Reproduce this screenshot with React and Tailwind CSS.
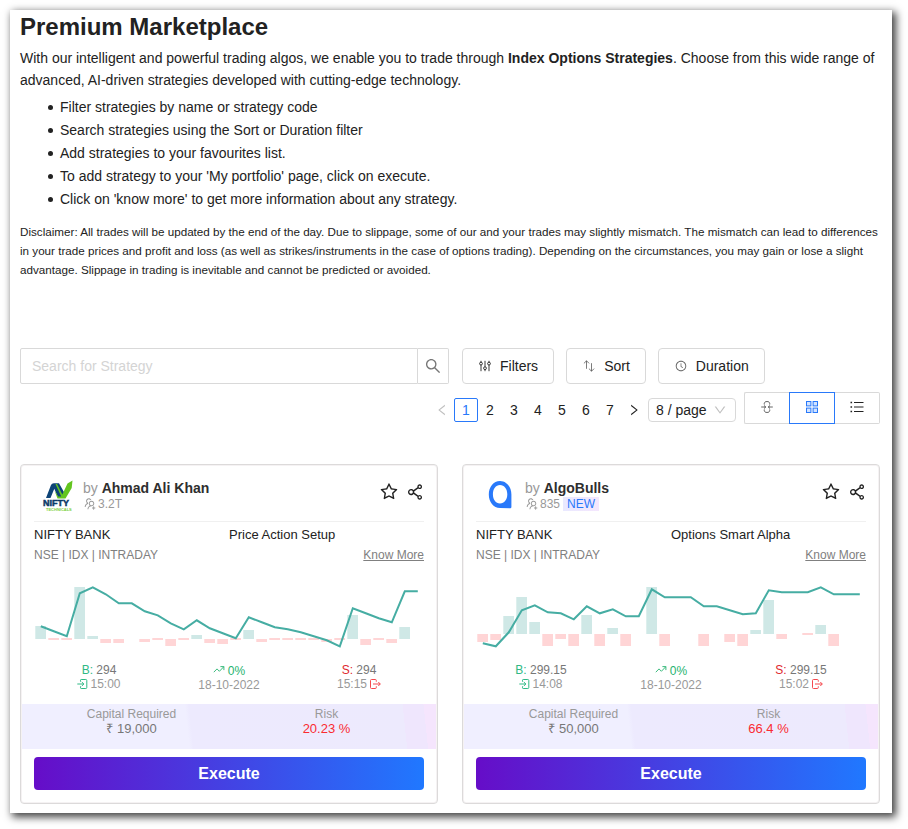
import React from "react";
import {
  AiOutlineClockCircle,
  AiOutlineDown,
  AiOutlineLeft,
  AiOutlineRight,
  AiOutlineSearch,
  AiOutlineShareAlt,
  AiOutlineStar,
  AiOutlineUsergroupAdd,
} from "react-icons/ai";

const TIPS = [
  "Filter strategies by name or strategy code",
  "Search strategies using the Sort or Duration filter",
  "Add strategies to your favourites list.",
  "To add strategy to your 'My portfolio' page, click on execute.",
  "Click on 'know more' to get more information about any strategy.",
];

const STRATEGIES = [
  {
    author: "Ahmad Ali Khan",
    logo: "nifty",
    followers: "3.2T",
    isNew: false,
    name: "Price Action Setup",
    buy: "294",
    buyTime: "15:00",
    sell: "294",
    sellTime: "15:15",
    capital: "₹ 19,000",
    risk: "20.23 %",
    base: 64,
    line: [51, 56, 61, 18, 12, 19, 28, 28, 36, 40, 48, 54, 45, 53, 58, 63, 42, 47, 52, 54, 57, 61, 65, 71, 33, 38, 43, 47, 16, 16],
    bars: [13, -2, -2, 52, 3, -4, -4, 0, -3, -2, -7, -2, 4, -4, -5, -2, 9, -3, -2, -1, -1, -2, -3, -2, 24, -6, -1, -4, 12, 0],
  },
  {
    author: "AlgoBulls",
    logo: "algobulls",
    followers: "835",
    isNew: true,
    name: "Options Smart Alpha",
    buy: "299.15",
    buyTime: "14:08",
    sell: "299.15",
    sellTime: "15:02",
    capital: "₹ 50,000",
    risk: "66.4 %",
    base: 59,
    line: [68, 71, 57, 35, 30, 37, 38, 44, 31, 38, 34, 41, 41, 14, 22, 22, 22, 31, 31, 35, 39, 38, 15, 17, 17, 17, 12, 19, 19, 19],
    bars: [-8, -6, 18, 37, 12, -12, -5, -12, 19, -12, 6, -12, 0, 47, -12, 0, 0, -12, 0, -8, -12, 4, 34, -5, 0, -1, 9, -12, 0, 0],
  },
];

function SlidersIcon() {
  return (
    <svg viewBox="0 0 12 12" className="h-3 w-3" fill="none" stroke="currentColor" strokeWidth="0.9" aria-hidden="true">
      <path d="M2 .8v1.4M2 5v6.2M6 .8v6M6 9.6v1.6M10 .8v1.4M10 5v6.2" />
      <circle cx="2" cy="3.6" r="1.4" />
      <circle cx="6" cy="8.2" r="1.4" />
      <circle cx="10" cy="3.6" r="1.4" />
    </svg>
  );
}

function SortIcon() {
  return (
    <svg viewBox="0 0 12 12" className="h-3 w-3 text-[#444]" fill="none" stroke="currentColor" strokeWidth="0.7" aria-hidden="true">
      <path d="M3.5 8.8V.8M.9 3.4 3.5.8l2.600 2.600M8.500 3.200v8M5.900 8.600l2.600 2.600 2.600-2.600" />
    </svg>
  );
}

function CollapseIcon() {
  return (
    <svg viewBox="0 0 12 12" className="h-3 w-3" fill="none" stroke="currentColor" strokeWidth="0.9" aria-hidden="true">
      <path d="M3.300 3.600V2.200L4.500.6h3l1.200 1.600v1.400M3.300 8.400v1.400l1.200 1.600h3l1.200-1.600V8.400" />
      <path d="M.2 6h4.600M3 4.500 4.800 6 3 7.500M11.800 6H7.200M9 4.500 7.200 6 9 7.500" />
    </svg>
  );
}

function GridIcon() {
  return (
    <svg viewBox="0 0 12 12" className="h-3 w-3" fill="#d3e4ff" stroke="currentColor" strokeWidth="1" aria-hidden="true">
      <rect x="0.500" y="0.500" width="4.400" height="4.400" />
      <rect x="7.100" y="0.500" width="4.400" height="4.400" />
      <rect x="0.500" y="7.100" width="4.400" height="4.400" />
      <rect x="7.100" y="7.100" width="4.400" height="4.400" />
    </svg>
  );
}

function ListIcon() {
  return (
    <svg viewBox="0 0 14 12" className="h-3 w-[14px]" fill="none" stroke="currentColor" aria-hidden="true">
      <path d="M4 1.500h9.500M4 6h9.500M4 10.500h9.500" strokeWidth="1.200" />
      <path d="M.5 1.500h1.600M.5 6h1.600M.5 10.500h1.600" strokeWidth="1.600" />
    </svg>
  );
}

function RiseIcon() {
  return (
    <svg viewBox="0 0 12 12" className="h-3 w-3" fill="none" stroke="currentColor" strokeWidth="0.9" aria-hidden="true">
      <path d="M.8 7.200 4 3.900l2.400 2.400 4.300-4.500M7.400 1.600h3.500v3.500" />
    </svg>
  );
}

function EnterIcon() {
  return (
    <svg viewBox="0 0 12 12" className="h-3 w-3 text-[#2fb985]" fill="none" stroke="currentColor" strokeWidth="1" aria-hidden="true">
      <path d="M3.500 3.700V2.200Q3.500 1.500 4.200 1.500h4.600q1 0 1 1v7q0 1-1 1H4.200Q3.500 10.500 3.500 9.800V8.300" />
      <path d="M.3 6h6.400M4.800 4 6.900 6 4.800 8" />
    </svg>
  );
}

function ExitIcon() {
  return (
    <svg viewBox="0 0 12 12" className="h-3 w-3 text-[#f5484e]" fill="none" stroke="currentColor" strokeWidth="1" aria-hidden="true">
      <path d="M7.300 3.700V2.500q0-1-1-1H2.500q-1 0-1 1v7q0 1 1 1h3.800q1 0 1-1V8.300" />
      <path d="M4 6h7.200M9.300 4l2 2-2 2" />
    </svg>
  );
}

function NiftyLogo() {
  return (
    <svg viewBox="0 0 32 32" className="h-8 w-8" role="img" aria-label="Nifty Technicals">
      <path d="M4 18 9 5q.8-1.800 2.800-1.800H17L22.500 13 20 17.500h-4L12.300 8.800 8.500 18z" fill="#0d4477" />
      <path d="m15 4 5.300 10.500L25.500 3.500l5-3-.8 7.500L23.500 18.500H15.500l-3-8 3.700 6h3L13.500 4z" fill="#63c51f" />
      <text x="1" y="26" fontSize="9" fontWeight="bold" fill="#0d3a68" stroke="#0d3a68" strokeWidth="0.500">
        NIFTY
      </text>
      <text x="4" y="31" fontSize="4" fontWeight="bold" fill="#7ccf3a">
        TECHNICALS
      </text>
    </svg>
  );
}

function AlgoBullsLogo() {
  return (
    <svg viewBox="0 0 32 32" className="h-8 w-8" role="img" aria-label="AlgoBulls logo">
      <path
        fill="#2979fa"
        fillRule="evenodd"
        d="M16 1C9.500 1 4.800 7 4.800 14.500S9.500 28 16 28l10.200.2q1.200 0 1.200-1.200V14.500C27.400 7 22.500 1 16 1Zm0 4c4.300 0 7.300 4 7.300 9.300S20.300 23.500 16 23.500 8.900 19.600 8.900 14.300 11.700 5 16 5Z"
      />
    </svg>
  );
}

function Chart({ line, bars, base }) {
  return (
    <svg viewBox="0 0 390 80" className="mt-[11px] block w-full" role="img" aria-label="Profit and loss chart">
      {bars.map((v, i) =>
        v === 0 ? null : (
          <rect
            key={i}
            x={i * 13 + 1.3}
            y={v > 0 ? base - v : v > -3 ? base - 1 : base}
            width="10.700"
            height={Math.max(2, Math.abs(v))}
            fill={v > 0 ? "#cfe8e6" : "#ffd5d6"}
          />
        ),
      )}
      <polyline
        points={line.map((y, i) => `${i * 13 + 6.8},${y + 0.3}`).join(" ")}
        fill="none"
        stroke="#46ada3"
        strokeWidth="2"
      />
    </svg>
  );
}

function StrategyCard({ item }) {
  return (
    <article className="rounded border border-[#dcdada] pt-[13px] pb-[13px] shadow-[inset_0_0_0_1px_#f5f2f3]">
      <div className="px-[13px]">
        <header className="flex items-start border-b border-[#f0f0f0] pb-[9px]">
          <div className="mr-2 flex w-10 shrink-0 justify-end pt-[2px]">
            {item.logo === "nifty" ? <NiftyLogo /> : <AlgoBullsLogo />}
          </div>
          <div className="min-w-0 flex-1 pl-px">
            <h2 className="text-sm leading-5 text-[#999]">
              by <b className="text-[#2e2e2e]">{item.author}</b>
            </h2>
            <p className="flex items-center text-xs leading-3 text-[#999]">
              <AiOutlineUsergroupAdd className="-my-px mr-px h-[14px] w-[14px]" />
              {item.followers}
              {item.isNew && (
                <span className="-my-px ml-[3px] bg-linear-to-r from-[#e9e9ff] to-[#f4e6fd] px-1 leading-[14px] text-[#2979fa]">
                  NEW
                </span>
              )}
            </p>
          </div>
          <div className="-mr-px flex gap-[6px] pt-1 text-[#222]">
            <button type="button" aria-label="Add to favourites">
              <AiOutlineStar className="h-5 w-5" />
            </button>
            <button type="button" aria-label="Share">
              <AiOutlineShareAlt className="h-5 w-5" />
            </button>
          </div>
        </header>
        <div className="mt-[3px] grid grid-cols-2 text-[13px] leading-5 text-[#222]">
          <span>NIFTY BANK</span>
          <span>{item.name}</span>
        </div>
        <div className="mt-px flex justify-between text-xs leading-[18px] text-[#808080]">
          <span>NSE | IDX | INTRADAY</span>
          <a href="#know-more" className="underline">
            Know More
          </a>
        </div>
        <Chart line={item.line} bars={item.bars} base={item.base} />
        <div className="mt-2 grid grid-cols-3 text-center text-xs leading-[14px] text-[#999]">
          <div>
            <p className="text-[#777]">
              <span className="text-[#2fb985]">B:</span> {item.buy}
            </p>
            <p className="flex items-center justify-center gap-px">
              <EnterIcon />
              {item.buyTime}
            </p>
          </div>
          <div className="pt-px">
            <p className="flex items-center justify-center gap-[3px] text-[#26b36f]">
              <RiseIcon />
              0%
            </p>
            <p>18-10-2022</p>
          </div>
          <div>
            <p className="text-[#777]">
              <span className="text-[#e0292f]">S:</span> {item.sell}
            </p>
            <p className="flex items-center justify-center gap-[2px]">
              {item.sellTime}
              <ExitIcon />
            </p>
          </div>
        </div>
      </div>
      <div className="mx-px mt-3 grid h-[45px] grid-cols-2 bg-[linear-gradient(84deg,#f0efff_40%,#edeafe_41%,#edeafd_92%,#efe6fd_92%,#efe6fd_97%,#f5e5fd_97%)] px-3 pt-[3px] text-center text-xs leading-[14px] text-[#999]">
        <div>
          <p>Capital Required</p>
          <p className="text-[13px] leading-[15px] text-[#777]">{item.capital}</p>
        </div>
        <div>
          <p>Risk</p>
          <p className="text-[13px] leading-[15px] text-[#fa2b31]">{item.risk}</p>
        </div>
      </div>
      <div className="mt-2 px-[13px]">
        <button
          type="button"
          className="h-[33px] w-full rounded bg-linear-to-r/srgb from-[#660dc8] to-[#2078ff] text-base font-bold text-white"
        >
          Execute
        </button>
      </div>
    </article>
  );
}

const TOOL_BUTTON =
  "flex h-9 items-center gap-[9px] rounded border border-[#d9d9d9] pr-[15px] pl-4 text-sm text-[#222]";

export default function App() {
  return (
    <div className="bg-white pt-[10px] pr-4 pb-4 pl-[10px] font-['Liberation_Sans',Arial,sans-serif] text-[#222]">
      <main className="bg-white pr-3 pb-[9px] pl-[10px] shadow-[3px_3px_8px_1px_rgba(0,0,0,0.75)]">
        <h1 className="pt-px text-2xl leading-8 font-bold">Premium Marketplace</h1>
        <p className="mt-1 text-sm leading-[22px]">
          With our intelligent and powerful trading algos, we enable you to trade through{" "}
          <b>Index Options Strategies</b>. Choose from this wide range of advanced, AI-driven strategies
          developed with cutting-edge technology.
        </p>
        <ul className="mt-[5px] pl-7 text-sm leading-[23px]">
          {TIPS.map((tip) => (
            <li
              key={tip}
              className="flex items-center gap-[7px] before:h-[5px] before:w-[5px] before:rounded-full before:bg-[#222] before:content-['']"
            >
              {tip}
            </li>
          ))}
        </ul>
        <div className="text-sm">
          <p className="mt-[11px] [font-size:smaller] leading-[19px]">
            Disclaimer: All trades will be updated by the end of the day. Due to slippage, some of our and your
            trades may slightly mismatch. The mismatch can lead to differences in your trade prices and profit
            and loss (as well as strikes/instruments in the case of options trading). Depending on the
            circumstances, you may gain or lose a slight advantage. Slippage in trading is inevitable and cannot
            be predicted or avoided.
          </p>
        </div>

        <div className="mt-[69px] flex gap-3">
          <form className="flex h-9 w-1/2 pr-px" onSubmit={(e) => e.preventDefault()}>
            <input
              type="text"
              aria-label="Search for Strategy"
              placeholder="Search for Strategy"
              className="min-w-0 flex-1 rounded-l-xs border border-[#d9d9d9] px-[11px] text-sm outline-none placeholder:text-[#d4d4d4]"
            />
            <button
              type="submit"
              aria-label="Search"
              className="flex w-[31px] items-center justify-center rounded-r-xs border border-l-0 border-[#d9d9d9] text-[#777]"
            >
              <AiOutlineSearch className="h-[18px] w-[18px]" />
            </button>
          </form>
          <button type="button" className={TOOL_BUTTON}>
            <SlidersIcon />
            Filters
          </button>
          <button type="button" className={TOOL_BUTTON}>
            <SortIcon />
            Sort
          </button>
          <button type="button" className={TOOL_BUTTON}>
            <AiOutlineClockCircle className="h-3 w-3 text-[#666]" />
            Duration
          </button>
        </div>

        <div className="mt-2 flex items-end justify-end gap-2">
          <nav aria-label="Pages" className="mb-[2px] flex items-center text-sm">
            <button type="button" aria-label="Previous page" disabled className="flex h-6 w-6 items-center justify-center text-[#bfbfbf]">
              <AiOutlineLeft className="h-[14px] w-[14px]" />
            </button>
            <button type="button" aria-current="page" className="h-6 w-6 rounded-xs border border-[#2979fa] text-[#2979fa]">
              1
            </button>
            {[2, 3, 4, 5, 6, 7].map((n) => (
              <button key={n} type="button" className="h-6 w-6">
                {n}
              </button>
            ))}
            <button type="button" aria-label="Next page" className="flex h-6 w-6 items-center justify-center">
              <AiOutlineRight className="h-[14px] w-[14px]" />
            </button>
            <div className="relative ml-[2px]">
              <select aria-label="Page size" className="block h-6 w-[88px] appearance-none rounded border border-[#d9d9d9] bg-white pl-[7px] text-sm">
                <option>8 / page</option>
              </select>
              <AiOutlineDown className="pointer-events-none absolute top-[5px] right-[9px] h-[14px] w-[14px] text-[#bfbfbf]" />
            </div>
          </nav>
          <div role="group" aria-label="View" className="flex">
            <button type="button" aria-label="Compact view" className="flex h-8 w-[45px] items-center justify-center rounded-l-xs border border-r-0 border-[#d9d9d9] pb-[2px] text-[#555]">
              <CollapseIcon />
            </button>
            <button type="button" aria-label="Grid view" aria-pressed="true" className="flex h-8 w-[46px] items-center justify-center border border-[#2979fa] pb-[2px] text-[#2979fa]">
              <GridIcon />
            </button>
            <button type="button" aria-label="List view" className="flex h-8 w-[45px] items-center justify-center rounded-r-xs border border-l-0 border-[#d9d9d9] pb-[2px] text-[#222]">
              <ListIcon />
            </button>
          </div>
        </div>

        <section className="mt-10 grid grid-cols-2 gap-6">
          {STRATEGIES.map((item) => (
            <StrategyCard key={item.author} item={item} />
          ))}
        </section>
      </main>
    </div>
  );
}
